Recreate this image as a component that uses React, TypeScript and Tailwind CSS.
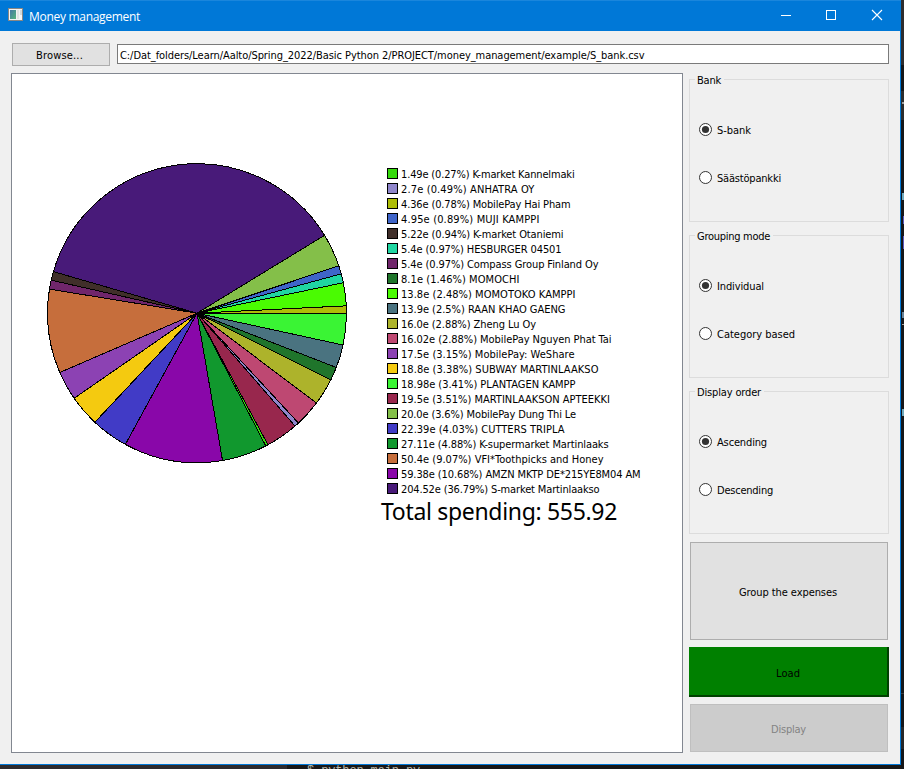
import { useLayoutEffect, useRef, useState } from "react";

type TextProps = { children: string; w: number; className?: string };

/** Single-line text whose tracking is adjusted so that it spans `w` pixels. */
function Fit({ children, w, className = "" }: TextProps) {
  const ref = useRef<HTMLSpanElement>(null);
  const [spacing, setSpacing] = useState(0);
  useLayoutEffect(() => {
    if (ref.current) {
      const natural = ref.current.getBoundingClientRect().width;
      setSpacing((w - natural) / children.length);
    }
  }, [w, children]);
  return (
    <span ref={ref} className={`inline-block whitespace-pre ${className}`} style={{ letterSpacing: `${spacing}px` }}>
      {children}
    </span>
  );
}

type Expense = { amount: number; label: string; color: string; w: number };

const expenses: Expense[] = [
  { amount: 1.49, label: "1.49e (0.27%) K-market Kannelmaki", color: "#35da0c", w: 173.5 },
  { amount: 2.7, label: "2.7e (0.49%) ANHATRA OY", color: "#8f86cb", w: 133.5 },
  { amount: 4.36, label: "4.36e (0.78%) MobilePay Hai Pham", color: "#aebd07", w: 169.5 },
  { amount: 4.95, label: "4.95e (0.89%) MUJI KAMPPI", color: "#3f65c9", w: 138.5 },
  { amount: 5.22, label: "5.22e (0.94%) K-market Otaniemi", color: "#402f2a", w: 162.5 },
  { amount: 5.4, label: "5.4e (0.97%) HESBURGER 04501", color: "#20d6a2", w: 160.5 },
  { amount: 5.4, label: "5.4e (0.97%) Compass Group Finland Oy", color: "#70266b", w: 197.5 },
  { amount: 8.1, label: "8.1e (1.46%) MOMOCHI", color: "#1f752b", w: 118.5 },
  { amount: 13.8, label: "13.8e (2.48%) MOMOTOKO KAMPPI", color: "#4afb02", w: 174.5 },
  { amount: 13.9, label: "13.9e (2.5%) RAAN KHAO GAENG", color: "#4a7380", w: 164.5 },
  { amount: 16.0, label: "16.0e (2.88%) Zheng Lu Oy", color: "#adb32b", w: 135 },
  { amount: 16.02, label: "16.02e (2.88%) MobilePay Nguyen Phat Tai", color: "#be4872", w: 210.5 },
  { amount: 17.5, label: "17.5e (3.15%) MobilePay: WeShare", color: "#8c42b3", w: 173.5 },
  { amount: 18.8, label: "18.8e (3.38%) SUBWAY MARTINLAAKSO", color: "#f4ca10", w: 197.5 },
  { amount: 18.98, label: "18.98e (3.41%) PLANTAGEN KAMPP", color: "#3af434", w: 174.5 },
  { amount: 19.5, label: "19.5e (3.51%) MARTINLAAKSON APTEEKKI", color: "#98274d", w: 209 },
  { amount: 20.0, label: "20.0e (3.6%) MobilePay Dung Thi Le", color: "#84bf49", w: 175 },
  { amount: 22.39, label: "22.39e (4.03%) CUTTERS TRIPLA", color: "#413bc6", w: 163.5 },
  { amount: 27.11, label: "27.11e (4.88%) K-supermarket Martinlaaks", color: "#11982e", w: 207.5 },
  { amount: 50.4, label: "50.4e (9.07%) VFI*Toothpicks and Honey", color: "#c66e3c", w: 202.5 },
  { amount: 59.38, label: "59.38e (10.68%) AMZN MKTP DE*215YE8M04 AM", color: "#8907a9", w: 239.5 },
  { amount: 204.52, label: "204.52e (36.79%) S-market Martinlaakso", color: "#481a79", w: 198.5 },
];

// Clockwise order of the slices, starting at three o'clock.
const sliceOrder = [14, 9, 7, 10, 11, 1, 15, 0, 18, 20, 17, 13, 12, 19, 6, 4, 21, 16, 3, 5, 8, 2];

function Pie() {
  const total = expenses.reduce((sum, e) => sum + e.amount, 0);
  const cx = 150;
  const cy = 150.2;
  const r = 149.5;
  let angle = 0;
  const slices = sliceOrder.map((index) => {
    const { amount, color } = expenses[index];
    const start = angle;
    angle += (amount / total) * Math.PI * 2;
    const large = angle - start > Math.PI ? 1 : 0;
    const d = `M${cx} ${cy}L${cx + r * Math.cos(start)} ${cy + r * Math.sin(start)}A${r} ${r} 0 ${large} 1 ${cx + r * Math.cos(angle)} ${cy + r * Math.sin(angle)}Z`;
    return <path key={index} d={d} fill={color} stroke="#000" strokeWidth="1" strokeLinejoin="bevel" />;
  });
  return (
    <svg width="301" height="301" viewBox="0 0 301 301" shapeRendering="crispEdges" className="ml-[35px] mt-[89px] shrink-0">
      {slices}
    </svg>
  );
}

function Radio({ label, w, checked }: { label: string; w: number; checked?: boolean }) {
  return (
    <div className="flex h-[14px] items-start">
      <svg width="13" height="13" viewBox="0 0 13 13" className="mr-[5px]">
        <circle cx="6.5" cy="6.5" r="6" fill="#fff" stroke="#333" strokeWidth="1" />
        {checked && <circle cx="6.5" cy="6.5" r="3.6" fill="#333" />}
      </svg>
      <Fit w={w} className="mt-[1px]">{label}</Fit>
    </div>
  );
}

type Option = { label: string; w: number };

function GroupBox({ title, w, options }: { title: string; w: number; options: [Option, Option] }) {
  return (
    <section className="mb-[13px] h-[143px] w-[200px] border border-[#dcdcdc]">
      <div className="-mt-[6px] ml-[5px] flex h-[14px] w-fit items-center bg-[#f0f0f0] pl-[2px] pr-[3px]">
        <Fit w={w}>{title}</Fit>
      </div>
      <div className="ml-[9px] mt-[35px] flex flex-col gap-[34px]">
        <Radio label={options[0].label} w={options[0].w} checked />
        <Radio label={options[1].label} w={options[1].w} />
      </div>
    </section>
  );
}

function TitleBar() {
  return (
    <header className="flex h-[31px] w-[901px] items-center border-t border-[#1a86dc] bg-[#0078d7] text-white">
      <svg width="15" height="13" viewBox="0 0 15 13" className="-mt-[3px] ml-2">
        <defs>
          <linearGradient id="app" x1="0" y1="0" x2="1" y2="1">
            <stop offset="0" stopColor="#4779a5" />
            <stop offset="1" stopColor="#57b57c" />
          </linearGradient>
        </defs>
        <rect x="0.5" y="0.5" width="14" height="12" fill="#f4f4f4" stroke="#8a8783" />
        <rect x="2" y="2" width="6" height="9" fill="url(#app)" />
        <rect x="9" y="2" width="2" height="9" fill="#e3e3e3" />
        <rect x="12" y="2" width="2" height="5" fill="#d3d9dc" />
      </svg>
      <Fit w={111} className="ml-[6px] mt-[1px] font-['Open_Sans','Noto_Sans',sans-serif] text-[12px] leading-[16px] [font-stretch:normal]">
        Money management
      </Fit>
      <svg width="102" height="12" viewBox="-1 0 102 12" className="-mt-[2px] ml-auto mr-[18px]" fill="none" stroke="#fff">
        <path d="M-1 6.5H9M44.5 1.5H53.5V10.5H44.5Z" shapeRendering="crispEdges" />
        <path d="M90 1L100 11M100 1L90 11" strokeWidth="1.1" />
      </svg>
    </header>
  );
}

/** Sliver of the editor window that shows past the right border. */
function EditorSliver() {
  return (
    <div className="flex w-[3px] flex-col items-end overflow-hidden bg-[#15171a]">
      <div className="h-[65px] w-full bg-[#2d2d2f]" />
      <div className="mt-[26px] flex h-[29px] w-full items-center bg-[#2b2d2e] pb-[6px]">
        <div className="ml-[1px] h-[2px] w-[2px] bg-[#a0a0a0]" />
      </div>
      <div className="mt-[73px] h-[7px] w-[2px] bg-[#6fa9bd]" />
      <div className="mt-[16px] h-[8px] w-[1px] bg-[#5a58c0]" />
      <div className="mt-[12px] h-[13px] w-[1px] bg-[#5a58c0]" />
      <div className="mt-[63px] h-[6px] w-[2px] bg-[#66839a]" />
      <div className="mt-[6px] h-[1px] w-[2px] bg-[#a0a0a0]" />
      <div className="mt-[84px] h-[7px] w-[2px] bg-[#6fa9bd]" />
      <div className="mt-[277px] h-[1px] w-full bg-[#3a3c3e]" />
      <div className="mt-[33px] h-[22px] w-full bg-[#262829]" />
    </div>
  );
}

export default function App() {
  return (
    <div className="flex h-[769px] w-[904px] flex-col overflow-hidden bg-[#1b1b1d] font-['DejaVu_Sans_Condensed','DejaVu_Sans',sans-serif] text-[11px] leading-[14px] text-black [font-stretch:condensed]">
      <div className="flex h-[765px]">
        <div className="flex w-[901px] shrink-0 flex-col border-b border-r border-[#0078d7] bg-[#f0f0f0]">
          <TitleBar />
          <div className="ml-3 mt-[12px] flex h-[23px] items-center">
            <button className="flex h-[23px] w-[98px] items-center justify-center border border-[#adadad] bg-[#e1e1e1] pr-[3px] pt-[2px]">
              <Fit w={47}>Browse...</Fit>
            </button>
            <div className="-mt-[1px] ml-[7px] flex h-[20px] w-[772px] items-center border border-[#7a7a7a] bg-white pl-[2px] pt-[3px]">
              <Fit w={524.5}>C:/Dat_folders/Learn/Aalto/Spring_2022/Basic Python 2/PROJECT/money_management/example/S_bank.csv</Fit>
            </div>
          </div>
          <main className="ml-[11px] mt-[7px] flex">
            <section className="flex h-[680px] w-[672px] border border-[#828790] bg-white">
              <Pie />
              <div className="ml-[33px] mt-[92px] w-[270px]">
                <ul className="ml-[6px]">
                  {expenses.map((e) => (
                    <li key={e.label} className="flex h-[15px] items-start pt-[2px]">
                      <span className="mr-[3px] h-[11px] w-[11px] shrink-0 border border-black" style={{ backgroundColor: e.color }} />
                      <Fit w={e.w}>{e.label}</Fit>
                    </li>
                  ))}
                </ul>
                <Fit w={236} className="font-['Noto_Sans',sans-serif] text-[23px] leading-[30px] [font-stretch:normal]">Total spending: 555.92</Fit>
              </div>
            </section>
            <aside className="ml-[6px] mt-[6px] w-[200px]">
              <GroupBox title="Bank" w={24} options={[{ label: "S-bank", w: 34 }, { label: "Säästöpankki", w: 64 }]} />
              <GroupBox title="Grouping mode" w={73} options={[{ label: "Individual", w: 47 }, { label: "Category based", w: 78 }]} />
              <GroupBox title="Display order" w={64} options={[{ label: "Ascending", w: 50 }, { label: "Descending", w: 56 }]} />
              <button className="ml-[1px] mt-[-5px] flex h-[98px] w-[198px] items-center justify-center border border-[#adadad] bg-[#e1e1e1] pr-[2px] pt-[3px]">
                <Fit w={98}>Group the expenses</Fit>
              </button>
              <button className="mt-[7px] flex h-[50px] w-[200px] items-center justify-center border-b-2 border-r-2 border-[#004000] bg-[#008000] pt-[6px]">
                <Fit w={24}>Load</Fit>
              </button>
              <button className="ml-[1px] mt-[7px] flex h-[48px] w-[198px] items-center justify-center border border-[#bfbfbf] bg-[#cccccc] pr-[1px] pt-[4px] text-[#838383]">
                <Fit w={35}>Display</Fit>
              </button>
            </aside>
          </main>
        </div>
        <EditorSliver />
      </div>
      <div className="flex h-1 overflow-hidden bg-[#181818] font-['Liberation_Mono',monospace] text-[12px] text-[#b5b5a8]">
        <div className="h-full w-[287px] bg-[#2d2b2e]" />
        <span className="ml-[20px] mt-[-1px] whitespace-pre">
          <Fit w={113}>$ python main.py</Fit>
        </span>
      </div>
    </div>
  );
}
